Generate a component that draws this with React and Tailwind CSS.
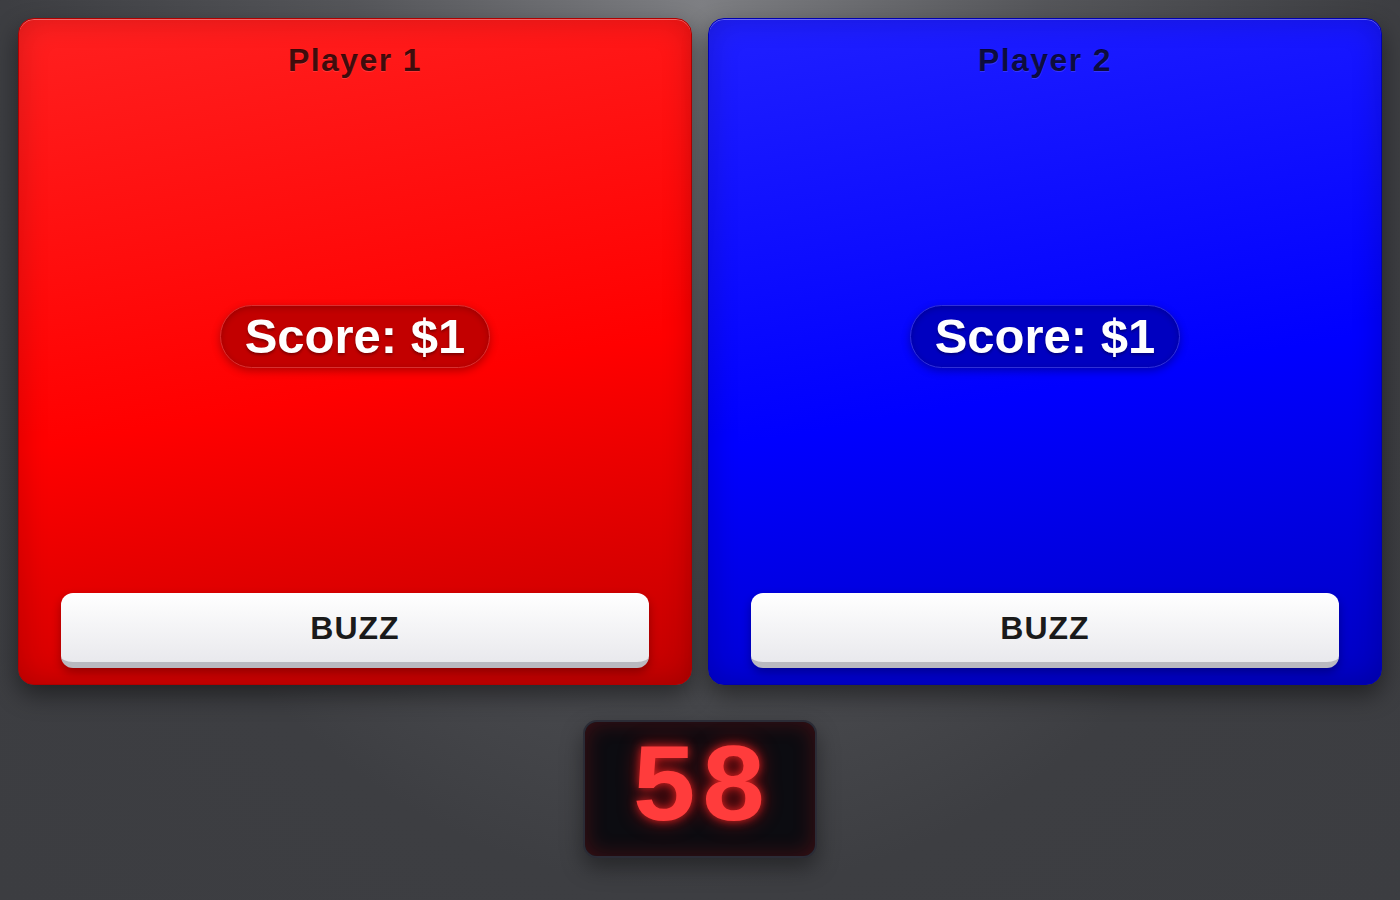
import React from 'react';

const players = [
  {
    name: 'Player 1',
    score: 1,
    panel: 'bg-[linear-gradient(170deg,#ff2020_0%,#ff0000_55%,#c20000_100%)] border-[#b00000]',
    pill: 'bg-[#c20000] border-[#d83030]',
  },
  {
    name: 'Player 2',
    score: 1,
    panel: 'bg-[linear-gradient(170deg,#2020ff_0%,#0000ff_55%,#0000c2_100%)] border-[#0000b0]',
    pill: 'bg-[#0000c0] border-[#3030d8]',
  },
];

const PlayerPanel = ({ player }) => (
  <div
    className={`flex flex-col items-center h-[667px] rounded-[16px] border px-[42px] pt-[23px] pb-[16px] shadow-[0_10px_25px_rgba(0,0,0,0.45),inset_0_1px_0_rgba(255,255,255,0.35),inset_0_0_30px_rgba(0,0,0,0.18)] ${player.panel}`}
  >
    <h2 className="text-[32px] leading-[37px] font-bold tracking-[1.4px] text-black/75 [text-shadow:0_1px_0_rgba(255,255,255,0.15)]">
      {player.name}
    </h2>
    <div className="flex-1 flex items-center justify-center">
      <div
        className={`rounded-full border px-[24px] py-[3px] text-[49px] leading-[55px] font-bold text-white shadow-[0_3px_8px_rgba(0,0,0,0.3),inset_0_2px_6px_rgba(0,0,0,0.2)] [text-shadow:0_2px_3px_rgba(0,0,0,0.35)] ${player.pill}`}
      >
        Score: ${player.score}
      </div>
    </div>
    <button className="w-full h-[75px] rounded-[12px] border-b-[6px] border-[#b9b9c0] bg-[linear-gradient(180deg,#ffffff_0%,#e9e9ed_100%)] text-[32px] font-bold tracking-[1px] text-[#1a1a1a] shadow-[0_4px_10px_rgba(0,0,0,0.3)]">
      BUZZ
    </button>
  </div>
);

export default function App() {
  return (
    <div
      className="min-h-screen p-[18px] flex flex-col bg-[radial-gradient(ellipse_at_50%_0%,#7e7f83_0%,#55565a_35%,#3d3e42_70%,#3c3d41_100%)]"
      style={{ fontFamily: '"Liberation Sans", Arial, sans-serif' }}
    >
      <div className="grid grid-cols-2 gap-[16px]">
        {players.map((p) => (
          <PlayerPanel key={p.name} player={p} />
        ))}
      </div>
      <div className="flex justify-center mt-[35px]">
        <div className="w-[234px] h-[138px] flex items-center justify-center pt-[4px] rounded-[14px] border-2 border-[#2b2c36] bg-[#0c0c11] shadow-[0_10px_22px_rgba(0,0,0,0.4),inset_0_0_22px_rgba(255,30,30,0.22)]">
          <span
            className="text-[112px] leading-none font-bold text-[#ff3c3c] tracking-[2px] [text-shadow:0_0_10px_rgba(255,40,40,0.85),0_0_22px_rgba(255,0,0,0.45)]"
            style={{ fontFamily: '"Liberation Mono", "Courier New", monospace' }}
          >
            58
          </span>
        </div>
      </div>
    </div>
  );
}
